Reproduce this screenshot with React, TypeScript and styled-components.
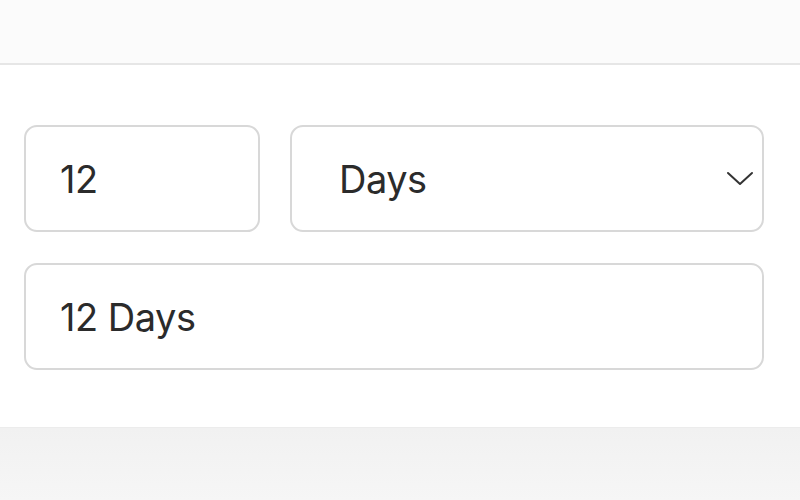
import React from "react";
import styled, { createGlobalStyle } from "styled-components";

const GlobalStyle = createGlobalStyle`
  html, body {
    margin: 0;
    padding: 0;
    background: #f3f3f3;
    font-family: Inter, "Noto Sans", sans-serif;
  }
`;

const Page = styled.div`
  width: 800px;
  height: 500px;
  display: flex;
  flex-direction: column;
  overflow: hidden;
`;

const TopStrip = styled.div`
  height: 63px;
  background: #fbfbfb;
  border-bottom: 2px solid #e6e6e6;
`;

const Panel = styled.div`
  height: 363px;
  background: #ffffff;
  padding: 60px 36px 0 24px;
  box-sizing: border-box;
  display: flex;
  flex-direction: column;
  gap: 31px;
  border-bottom: 1px solid #ececec;
`;

const BottomStrip = styled.div`
  flex: 1;
  background: linear-gradient(#f1f1f1, #f6f6f6);
`;

const Row = styled.div`
  display: flex;
  gap: 30px;
`;

interface FieldProps {
  width?: number;
  padLeft?: number;
}

const Field = styled.div<FieldProps>`
  box-sizing: border-box;
  height: 107px;
  flex: ${({ width }) => (width ? `0 0 ${width}px` : "1 1 auto")};
  border: 2px solid #d8d8d8;
  border-radius: 13px;
  background: #fff;
  display: flex;
  align-items: center;
  justify-content: space-between;
  padding: 0 8px 0 ${({ padLeft }) => padLeft ?? 34}px;
  font-size: 38px;
  color: #2b2b2b;
  letter-spacing: -0.5px;
`;

const FullField = styled(Field)`
  flex: none;
`;

const Chevron = () => (
  <svg width="28" height="16" viewBox="0 0 28 16" fill="none">
    <path d="M2 2 L14 13 L26 2" stroke="#333" strokeWidth="2" strokeLinecap="round" strokeLinejoin="round" />
  </svg>
);

export default function App() {
  return (
    <Page>
      <GlobalStyle />
      <TopStrip />
      <Panel>
        <Row>
          <Field width={236}>12</Field>
          <Field padLeft={47}>
            Days
            <Chevron />
          </Field>
        </Row>
        <FullField>12 Days</FullField>
      </Panel>
      <BottomStrip />
    </Page>
  );
}
